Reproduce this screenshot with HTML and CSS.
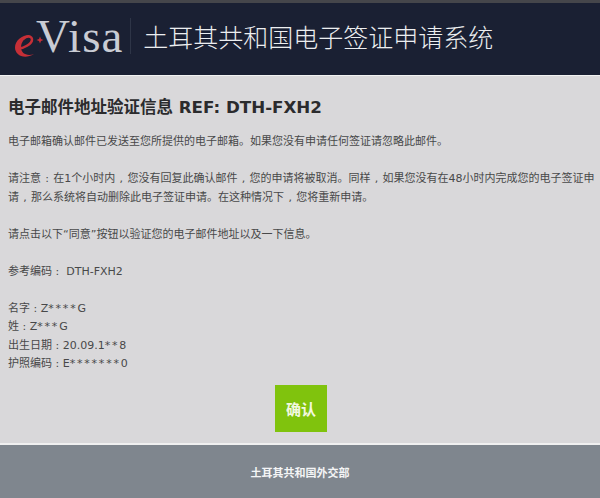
FILE: index.html
```html
<!DOCTYPE html>
<html lang="zh">
<head>
<meta charset="utf-8">
<title>eVisa</title>
<link rel="stylesheet" href="styles.css">
</head>
<body>
<header class="site-header">
  <div class="logo">
    <svg class="logo-mark" viewBox="0 0 30 26" aria-hidden="true">
      <path class="mark-fill" d="M17 2C9 1 1 7 1 14.500C1 22 10 27 20 21C13 23.500 7 20.500 7 14.500C7 9 11 4 17 2Z"/>
      <path class="mark-line" d="M5 15.500C10 15 18 11 18 6.500C18 3 13 2.500 9 6"/>
      <path class="mark-fill" d="M26 3.500L27 6L29.500 7L27 8L26 10.500L25 8L22.500 7L25 6Z"/>
    </svg>
    <span class="logo-visa">Visa</span>
  </div>
  <div class="divider"></div>
  <div class="site-title">土耳其共和国电子签证申请系统</div>
</header>
<main class="content">
  <h1 class="heading">电子邮件地址验证信息 <span class="ref">REF: DTH-FXH2</span></h1>
  <p class="para">电子邮箱确认邮件已发送至您所提供的电子邮箱。如果您没有申请任何签证请忽略此邮件。</p>
  <p class="para notice">请注意 : 在1个小时内 , 您没有回复此确认邮件 , 您的申请将被取消。同样 , 如果您没有在48小时内完成您的电子签证申请 , 那么系统将自动删除此电子签证申请。在这种情况下 , 您将重新申请。</p>
  <p class="para">请点击以下“同意”按钮以验证您的电子邮件地址以及一下信息。</p>
  <p class="para">参考编码 : &nbsp;DTH-FXH2</p>
  <p class="para">名字 : Z<span class="mask">****</span>G<br>姓 : Z<span class="mask">***</span>G<br>出生日期 : 20.09.1<span class="mask">**</span>8<br>护照编码 : E<span class="mask">*******</span>0</p>
  <div class="actions"><button class="confirm" type="button">确认</button></div>
</main>
<footer class="site-footer">土耳其共和国外交部</footer>
</body>
</html>
```
FILE: styles.css
```css
* { box-sizing: border-box; }
html, body { margin: 0; padding: 0; }
body {
  width: 600px;
  height: 498px;
  overflow: hidden;
  display: flex;
  flex-direction: column;
  background: #d9d8da;
  font-family: "DejaVu Sans", "Noto Sans CJK SC", sans-serif;
  color: #484849;
}
.site-header {
  height: 76px;
  flex: none;
  display: flex;
  align-items: center;
  padding: 0 0 6px 14px;
  background: #1a2033;
  border-top: 3px solid #45464b;
  border-bottom: 1px solid #f2f2f2;
}
.logo {
  display: flex;
  align-items: flex-end;
  font-family: "Liberation Serif", serif;
  line-height: 1;
}
.logo-mark {
  display: block;
  flex: none;
  width: 30px;
  height: 26px;
  margin: 0 -8px 1px 0;
}
.mark-fill { fill: #c62f37; }
.mark-line {
  fill: none;
  stroke: #c62f37;
  stroke-width: 2.500;
}
.logo-visa {
  font-size: 47px;
  letter-spacing: 1px;
  color: #c9ccd4;
}
.divider {
  width: 1px;
  height: 36px;
  margin: 0 12px 0 7px;
  background: #2e3547;
}
.site-title {
  font-family: "Noto Sans CJK SC", sans-serif;
  font-size: 25px;
  font-weight: 300;
  color: #eceef0;
  white-space: nowrap;
}
.content {
  flex: 1;
  min-height: 0;
  padding: 20px 4px 0 8px;
}
.heading {
  margin: 0 0 14px;
  font-family: "DejaVu Sans", "Noto Sans CJK SC", sans-serif;
  font-size: 16.500px;
  line-height: 22px;
  font-weight: bold;
  color: #2b2b2d;
}
.ref {
  font-size: 16.700px;
}
.para {
  margin: 0 0 18.500px;
  font-size: 11px;
  line-height: 18.500px;
}
.notice { word-spacing: 0.800px; }
.mask { letter-spacing: 1.800px; }
.actions {
  display: flex;
  justify-content: center;
  margin-top: -7px;
  padding-right: 2px;
}
.confirm {
  width: 52px;
  height: 47px;
  padding: 0;
  border: 0;
  background: #80c30d;
  color: #f2f8e0;
  font-family: "Noto Sans CJK SC", sans-serif;
  font-size: 15px;
  font-weight: bold;
}
.site-footer {
  height: 55px;
  flex: none;
  display: flex;
  align-items: center;
  justify-content: center;
  background: #7f868e;
  border-top: 2px solid #f0f0f0;
  color: #f4f5f6;
  font-size: 11px;
  font-weight: bold;
}
```
